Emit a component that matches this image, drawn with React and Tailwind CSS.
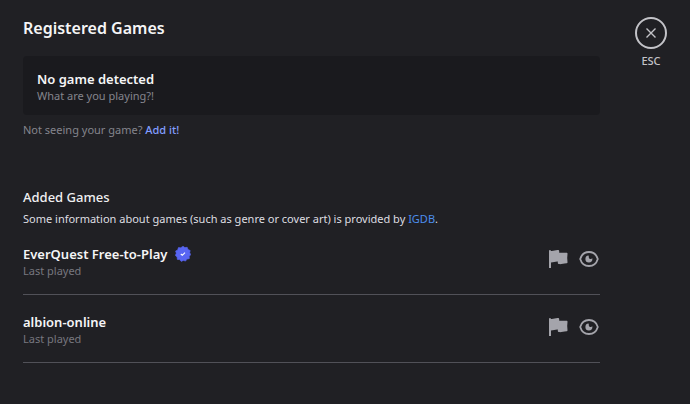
import React, { useState } from 'react';

const initialGames = [
  { id: 1, name: 'EverQuest Free-to-Play', verified: true },
  { id: 2, name: 'albion-online', verified: false },
];

const VerifiedBadge = () => (
  <svg width="16" height="16" viewBox="0 0 16 16" role="img" aria-label="Verified">
    <path
      fill="#5865f2"
      d="M8 .3 9.9 1.6 12.2 1.3 13 3.5 15.2 4.5 14.7 6.8 15.8 8.6 14.3 10.3 14.3 12.7 12 13.1 10.6 15.1 8.4 14.4 6.2 15.4 4.7 13.6 2.3 13.4 2.1 11 .3 9.4 1.3 7.2 .6 5 2.7 3.9 3.4 1.6 5.8 1.7Z"
      stroke="#5865f2"
      strokeWidth=".6"
      strokeLinejoin="round"
    />
    <path d="m5.8 8 1.5 1.3 2.7-2.7" fill="none" stroke="#fff" strokeWidth="1.1" />
  </svg>
);

const FlagIcon = () => (
  <svg width="20" height="20" viewBox="0 0 20 20" aria-hidden="true">
    <path
      fill="currentColor"
      d="M1 2.2c0-.7.4-1.1 1-1.1s.9.4.9.9c2.6.4 4.6-1.1 7-.9.9.1 1.3.4 1.3 1.2v1.5h7.1c.9 0 1.4.5 1.2 1.3l-.3 4 .3 3.8c.1.9-.3 1.3-1.1 1.3-2.9.1-5 1.2-7.2.9-1-.1-1.4-.5-1.4-1.3v-1.2c-2.4-.2-4.1.8-6.8.8V19H1Z"
    />
  </svg>
);

const EyeIcon = () => (
  <svg width="20" height="20" viewBox="0 0 20 20" aria-hidden="true">
    <path
      d="M1.2 10C2.5 5.7 5.6 3 10 3s7.5 2.7 8.8 7c-1.3 4.3-4.4 7-8.8 7S2.5 14.3 1.2 10Z"
      fill="none"
      stroke="currentColor"
      strokeWidth="1.8"
      strokeLinejoin="round"
    />
    <path fill="currentColor" d="M9.6 6.6a3.5 3.5 0 1 0 3.8 3.5c0-.3 0-.5-.1-.8-.4.5-.9.8-1.6.8-1.1 0-1.9-.8-1.9-1.9 0-.7 0-1.2-.2-1.6Z" />
  </svg>
);

const GameRow = ({ game }) => (
  <li className="flex items-start justify-between border-b border-[#515158] pb-[15px]">
    <div>
      <div className="flex items-center gap-2">
        <h3 className="text-[13px] leading-[18px] font-semibold text-[#f5f5f6]">{game.name}</h3>
        {game.verified && <VerifiedBadge />}
      </div>
      <p className="text-[11px] leading-4 text-[#77777f]">Last played</p>
    </div>
    <div className="flex gap-[11px] pt-1 pr-px text-[#a4a4ab]">
      <button type="button" aria-label={`Report ${game.name}`}>
        <FlagIcon />
      </button>
      <button type="button" aria-label={`Hide ${game.name}`}>
        <EyeIcon />
      </button>
    </div>
  </li>
);

const App = () => {
  const [games] = useState(initialGames);

  return (
    <div className="flex min-h-screen items-start gap-[35px] bg-[#202024] pr-[23px] pl-[23px] font-['Noto_Sans',sans-serif]">
      <main className="min-w-0 flex-1 pt-4 pb-10">
        <h1 className="text-[16px] leading-6 font-semibold text-[#f5f5f6]">Registered Games</h1>

        <section className="mt-4 rounded-sm bg-[#1a1a1e] px-[14px] pt-[14px] pb-[11px]">
          <h2 className="text-[13px] leading-[18px] font-semibold text-[#f5f5f6]">No game detected</h2>
          <p className="text-[11px] leading-4 text-[#85858d]">What are you playing?!</p>
        </section>
        <p className="mt-[7px] text-[11px] leading-4 text-[#85858d]">
          Not seeing your game?{' '}
          <a href="#add" className="font-medium text-[#829dff]">Add it!</a>
        </p>

        <h2 className="mt-[50px] text-[13px] leading-[18px] font-medium text-[#f0f0f2]">Added Games</h2>
        <p className="mt-[5px] text-[11px] leading-4 text-[#dedee1]">
          Some information about games (such as genre or cover art) is provided by{' '}
          <a href="#igdb" className="text-[#4c8eee]">IGDB</a>.
        </p>

        <ul className="mt-[18px] grid gap-[18px]">
          {games.map(game => (
            <GameRow key={game.id} game={game} />
          ))}
        </ul>
      </main>

      <button type="button" className="mt-[17px] flex w-8 flex-col items-center gap-1 text-[#c3c3c8]">
        <svg width="32" height="32" viewBox="0 0 32 32" fill="none" stroke="currentColor" aria-hidden="true">
          <circle cx="16" cy="16" r="15" strokeWidth="2" />
          <path d="m11.5 11.5 9 9m0-9-9 9" strokeWidth="1.4" />
        </svg>
        <span className="text-[11px] leading-4 font-medium">ESC</span>
      </button>
    </div>
  );
};

export default App;
